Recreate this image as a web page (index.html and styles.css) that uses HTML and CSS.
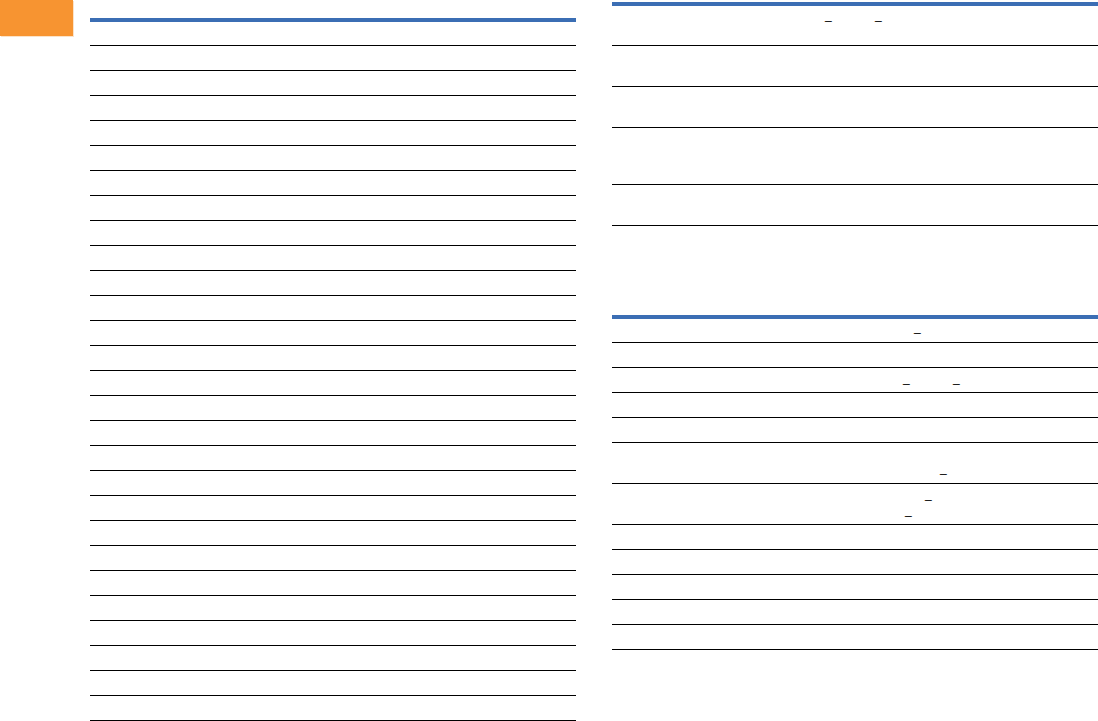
FILE: index.html
```html
<!DOCTYPE html>
<html lang="en">

<head>
    <meta charset="UTF-8">
    <meta name="viewport" content="width=device-width, initial-scale=1.0">
    <title>Sheet</title>
    <link rel="stylesheet" href="styles.css">
</head>

<body>
    <div class="page">
        <div class="tab"></div>

        <div class="sheet sheet-left">
            <div class="row r24"></div>
            <div class="row"></div>
            <div class="row"></div>
            <div class="row"></div>
            <div class="row"></div>
            <div class="row"></div>
            <div class="row"></div>
            <div class="row"></div>
            <div class="row"></div>
            <div class="row"></div>
            <div class="row"></div>
            <div class="row"></div>
            <div class="row"></div>
            <div class="row"></div>
            <div class="row"></div>
            <div class="row"></div>
            <div class="row"></div>
            <div class="row"></div>
            <div class="row"></div>
            <div class="row"></div>
            <div class="row"></div>
            <div class="row"></div>
            <div class="row"></div>
            <div class="row"></div>
            <div class="row"></div>
            <div class="row"></div>
            <div class="row"></div>
            <div class="row"></div>
        </div>

        <div class="side">
            <div class="sheet">
                <div class="row r40">
                    <div class="marks mk-1"><span>_</span><span>_</span></div>
                </div>
                <div class="row r41"></div>
                <div class="row r41"></div>
                <div class="row r57"></div>
                <div class="row r41"></div>
            </div>

            <div class="sheet sheet-lower">
                <div class="row r24">
                    <div class="marks mk-2"><span>_</span></div>
                </div>
                <div class="row"></div>
                <div class="row">
                    <div class="marks mk-3"><span>_</span><span>_</span></div>
                </div>
                <div class="row"></div>
                <div class="row"></div>
                <div class="row r41">
                    <div class="marks mk-4"><span>_</span></div>
                </div>
                <div class="row r41">
                    <div class="marks mk-5"><span>_</span></div>
                    <div class="marks mk-6"><span>_</span></div>
                </div>
                <div class="row"></div>
                <div class="row"></div>
                <div class="row"></div>
                <div class="row"></div>
                <div class="row"></div>
            </div>
        </div>
    </div>
</body>

</html>
```

FILE: styles.css
```css
body {
    margin: 0;
    background-color: white;
    font-family: "Liberation Sans", Arial, sans-serif;
    font-size: 11px;
    color: #000;
}

.page {
    display: flex;
    align-items: flex-start;
}

.tab {
    width: 73px;
    height: 36px;
    flex-shrink: 0;
    background-color: #f79431;
    box-shadow: 1px 1px 0 #fbe3c9;
}

.sheet {
    width: 486px;
    border-top: 4px solid #3b6eb4;
}

.sheet-left {
    margin-left: 17px;
    margin-top: 18px;
}

.side {
    margin-left: 36px;
    margin-top: 2px;
}

.sheet-lower {
    margin-top: 89px;
}

.row {
    box-sizing: border-box;
    height: 25px;
    border-bottom: 1px solid #000;
}

.r24 {
    height: 24px;
}

.r40 {
    height: 40px;
}

.r41 {
    height: 41px;
}

.r57 {
    height: 57px;
}

.marks {
    display: flex;
    gap: 44px;
    font-size: 12px;
    line-height: 12px;
}

.marks span {
    width: 6px;
}

.mk-1 {
    padding: 3px 0 0 213px;
}

.mk-2 {
    padding: 2px 0 0 302px;
}

.mk-3 {
    padding: 4px 0 0 291px;
}

.mk-4 {
    padding: 19px 0 0 328px;
}

.mk-5 {
    padding: 4px 0 0 313px;
}

.mk-6 {
    padding: 4px 0 0 293px;
}
```
